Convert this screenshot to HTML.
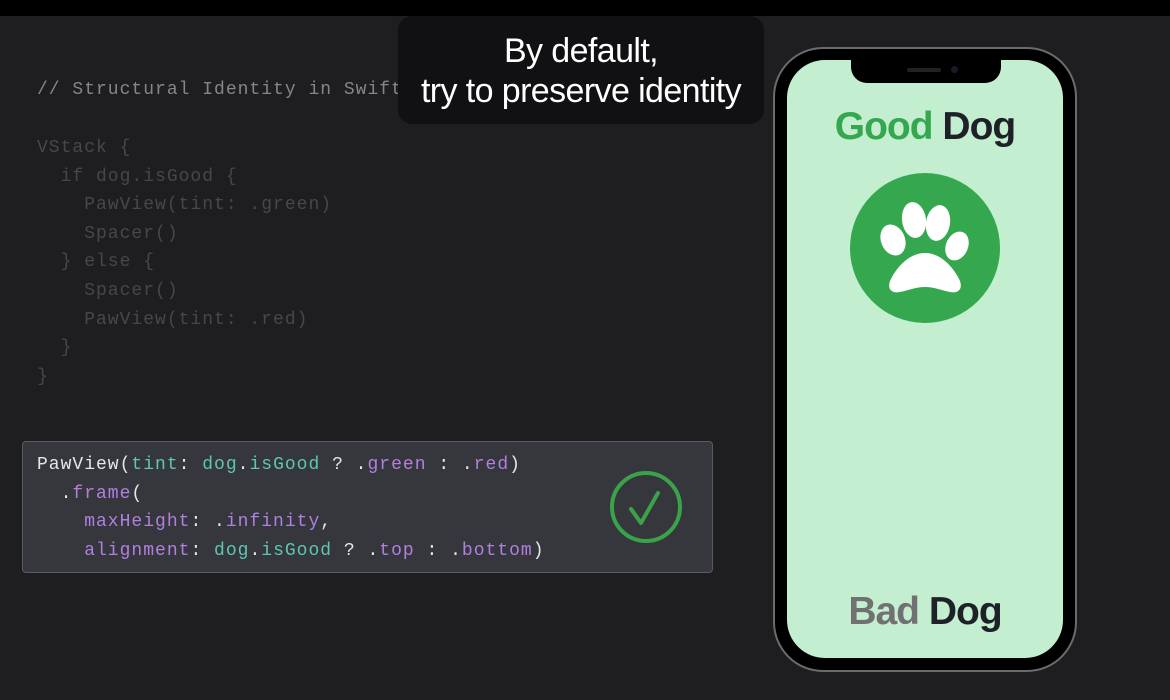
<!DOCTYPE html>
<html><head><style>
*{margin:0;padding:0;box-sizing:border-box}
body{width:1170px;height:700px;background:#1e1e21;position:relative;overflow:hidden;font-family:"Liberation Sans",sans-serif}
.top{position:absolute;left:0;top:0;width:1170px;height:16px;background:#000}
.code{position:absolute;font-family:"Liberation Mono",monospace;font-size:18px;letter-spacing:1px;white-space:pre;line-height:28.6px}
.faded{left:37px;top:134px;color:#46474c}
.cmt{position:absolute;left:37px;top:80px;font-family:"Liberation Mono",monospace;font-size:18px;letter-spacing:1px;color:#85868b;white-space:pre}
.cap{position:absolute;left:398px;top:16px;width:366px;height:108px;background:#111113;border-radius:14px;color:#fff;font-size:34px;text-align:center;line-height:40px;padding-top:15px;letter-spacing:-0.6px;white-space:nowrap}
.box{position:absolute;left:22px;top:441px;width:691px;height:132px;background:#36373c;border:1px solid #5a5b60;border-radius:4px}
.w{color:#e6e6e6}.t{color:#5ec6b2}.p{color:#b07fe0}
.phone{position:absolute;left:773px;top:47px;width:304px;height:625px;border-radius:50px;background:#000;border:2px solid #6b6b6e}
.screen{position:absolute;left:787px;top:60px;width:276px;height:598px;border-radius:38px;background:#c4eed0;overflow:hidden}
.notch{position:absolute;left:64px;top:0;width:150px;height:23px;background:#000;border-radius:0 0 16px 16px}
.lbl{position:absolute;width:276px;text-align:center;font-weight:bold;font-size:39px;letter-spacing:-1px}
</style></head><body>
<div class="top"></div>
<div class="cmt">// Structural Identity in SwiftUI</div>
<div class="code faded">VStack {
  if dog.isGood {
    PawView(tint: .green)
    Spacer()
  } else {
    Spacer()
    PawView(tint: .red)
  }
}</div>
<div class="cap">By default,<br>try to preserve identity</div>
<div class="box"></div>
<div class="code" style="left:37px;top:451px"><span class="w">PawView(</span><span class="t">tint</span><span class="w">: </span><span class="t">dog</span><span class="w">.</span><span class="t">isGood</span><span class="w"> ? .</span><span class="p">green</span><span class="w"> : .</span><span class="p">red</span><span class="w">)</span>
<span class="w">  .</span><span class="p">frame</span><span class="w">(</span>
<span class="p">    maxHeight</span><span class="w">: .</span><span class="p">infinity</span><span class="w">,</span>
<span class="p">    alignment</span><span class="w">: </span><span class="t">dog</span><span class="w">.</span><span class="t">isGood</span><span class="w"> ? .</span><span class="p">top</span><span class="w"> : .</span><span class="p">bottom</span><span class="w">)</span></div>
<svg style="position:absolute;left:606px;top:467px" width="80" height="80"><circle cx="40" cy="40" r="34" fill="none" stroke="#3aa24a" stroke-width="4"/><path d="M25 42 L35 56 L52 26" fill="none" stroke="#3aa24a" stroke-width="4" stroke-linecap="round" stroke-linejoin="round"/></svg>
<div class="phone"></div>
<div class="screen">
<div class="notch"><div style="position:absolute;left:56px;top:8px;width:34px;height:4px;border-radius:2px;background:#222"></div><div style="position:absolute;left:100px;top:6px;width:7px;height:7px;border-radius:50%;background:#1a1a2a"></div></div>
<div class="lbl" style="top:45px"><span style="color:#35a84f">Good</span> <span style="color:#1e2228">Dog</span></div>
<svg style="position:absolute;left:63px;top:113px" width="150" height="150"><circle cx="75" cy="75" r="75" fill="#35a84f"/>
<ellipse cx="43" cy="67" rx="12" ry="16" fill="#fff" transform="rotate(-22 43 67)"/>
<ellipse cx="64" cy="47" rx="12" ry="18" fill="#fff" transform="rotate(-8 64 47)"/>
<ellipse cx="88" cy="50" rx="12" ry="18" fill="#fff" transform="rotate(10 88 50)"/>
<ellipse cx="107" cy="73" rx="11" ry="15" fill="#fff" transform="rotate(24 107 73)"/>
<path d="M75 80 C60 80 48 93 42 104 C36 114 40 121 50 119 C60 117 66 114 75 114 C84 114 90 117 100 119 C110 121 114 114 108 104 C102 93 90 80 75 80 Z" fill="#fff"/></svg>
<div class="lbl" style="top:530px"><span style="color:#717171">Bad</span> <span style="color:#1e2228">Dog</span></div>
</div>
</body></html>
